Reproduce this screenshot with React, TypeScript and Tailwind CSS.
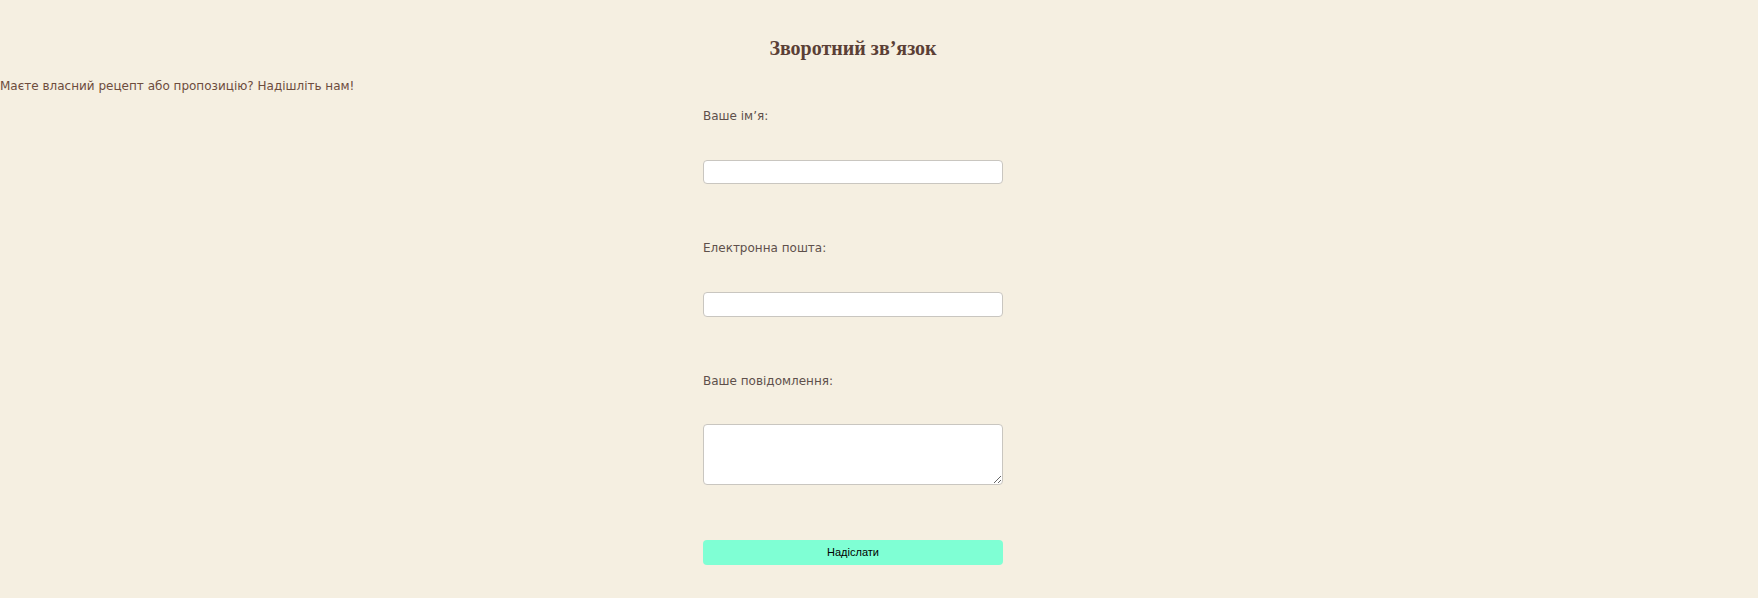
export default function App() {
  return (
    <div className="min-h-screen w-full bg-[#f5efe1] pr-[52px] pt-[36px] pb-[34px]">
      {/* Heading */}
      <h2 className="text-center font-['Liberation_Serif',serif] text-[20px] font-bold leading-[24px] text-[#5b3f36]">
        Зворотний зв’язок
      </h2>

      <p className="mt-[18px] font-['DejaVu_Sans',sans-serif] text-[12px] leading-[16px] text-[#6d4c3d]">
        Маєте власний рецепт або пропозицію? Надішліть нам!
      </p>

      <form className="mx-auto mt-[14px] flex w-[300px] flex-col font-['DejaVu_Sans',sans-serif]">
        <label className="text-[12px] leading-[16px] text-[#5e504b]">Ваше ім’я:</label>
        <input
          type="text"
          className="mt-[36px] h-[24px] w-full rounded-[4px] border border-[#c9c6c0] bg-white"
        />

        <label className="mt-[56px] text-[12px] leading-[16px] text-[#5e504b]">Електронна пошта:</label>
        <input
          type="email"
          className="mt-[36px] h-[25px] w-full rounded-[4px] border border-[#c9c6c0] bg-white"
        />

        <label className="mt-[56px] text-[12px] leading-[16px] text-[#5e504b]">Ваше повідомлення:</label>
        <textarea className="mt-[35px] h-[61px] w-full rounded-[4px] border border-[#c9c6c0] bg-white" />

        <button
          type="button"
          className="mt-[55px] h-[25px] w-full rounded-[4px] bg-[#7fffd4] font-['Liberation_Sans',Arial,sans-serif] text-[11px] text-black"
        >
          Надіслати
        </button>
      </form>
    </div>
  )
}
